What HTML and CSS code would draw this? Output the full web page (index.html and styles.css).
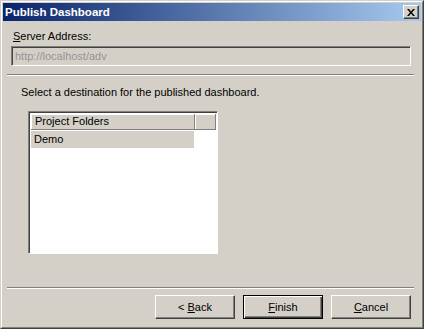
FILE: index.html
```html
<!DOCTYPE html>
<html lang="en">
<head>
    <meta charset="UTF-8">
    <title>Publish Dashboard</title>
    <link rel="stylesheet" href="styles.css">
</head>
<body>
    <div class="window">
        <div class="frame">
            <div class="titlebar">
                <span class="title">Publish Dashboard</span>
                <span class="close-btn">
                    <svg width="8" height="7" viewBox="0 0 8 7">
                        <path d="M0 0h2l2 2.5L6 0h2L5 3.5 8 7H6L4 4.5 2 7H0l3-3.5z" fill="#000"/>
                    </svg>
                </span>
            </div>

            <div class="content">
                <div class="label"><u>S</u>erver Address:</div>
                <div class="textbox">http://localhost/adv</div>
                <div class="separator"></div>

                <div class="prompt">Select a destination for the published dashboard.</div>
                <div class="listbox">
                    <div class="list-header">
                        <div class="col-head main">Project Folders</div>
                        <div class="col-head extra"></div>
                    </div>
                    <div class="list-row selected">Demo</div>
                </div>

                <div class="separator bottom"></div>
                <div class="buttons">
                    <span class="btn"><span>&lt; <u>B</u>ack</span></span>
                    <span class="btn default"><span><u>F</u>inish</span></span>
                    <span class="btn"><span><u>C</u>ancel</span></span>
                </div>
            </div>
        </div>
    </div>
</body>
</html>
```

FILE: styles.css
```css
body {
    margin: 0;
    background: #d4d0c8;
    font-family: 'Liberation Sans', Arial, sans-serif;
    font-size: 11px;
    line-height: 13px;
    color: #000;
}
u {
    text-decoration: underline;
    text-underline-offset: 1px;
}
.window {
    width: 424px;
    height: 329px;
    box-sizing: border-box;
    border: 1px solid;
    border-color: #d4d0c8 #404040 #404040 #d4d0c8;
}
.frame {
    height: 100%;
    box-sizing: border-box;
    border: 1px solid;
    border-color: #fff #808080 #808080 #fff;
    padding: 1px;
    display: flex;
    flex-direction: column;
}
.titlebar {
    height: 18px;
    background: linear-gradient(90deg, #0a246a, #a6caf0);
    display: flex;
    align-items: center;
    justify-content: space-between;
    padding: 0 2px 0 2px;
}
.title {
    color: #fff;
    font-weight: bold;
    font-size: 11.5px;
}
.close-btn {
    width: 16px;
    height: 14px;
    box-sizing: border-box;
    background: #d4d0c8;
    border: 1px solid;
    border-color: #fff #404040 #404040 #fff;
    box-shadow: inset -1px -1px #808080;
    display: flex;
    align-items: center;
    justify-content: center;
}
.content {
    flex: 1;
    display: flex;
    flex-direction: column;
    padding: 9px 10px 0 8px;
}
.label {
    margin-left: 2px;
    height: 13px;
}
.textbox {
    margin-top: 3px;
    width: 400px;
    height: 20px;
    box-sizing: border-box;
    border: 1px solid;
    border-color: #808080 #fff #fff #808080;
    box-shadow: inset 1px 1px #404040;
    color: #949494;
    padding: 3px 0 0 3px;
}
.separator {
    margin: 8px 0 0 -4px;
    width: 407px;
    height: 1px;
    background: #808080;
    border-bottom: 1px solid #fff;
}
.prompt {
    margin: 10px 0 0 10px;
}
.listbox {
    margin: 12px 0 0 17px;
    width: 190px;
    height: 143px;
    box-sizing: border-box;
    border: 1px solid;
    border-color: #808080 #fff #fff #808080;
    box-shadow: inset 1px 1px #404040;
    background: #fff;
    padding: 2px 1px 0 2px;
}
.list-header {
    display: flex;
    height: 16px;
}
.col-head {
    box-sizing: border-box;
    background: #d4d0c8;
    border-right: 1px solid #808080;
    border-bottom: 1px solid #808080;
    box-shadow: inset 1px 1px #fff;
    padding: 1px 0 0 4px;
}
.col-head.main {
    width: 164px;
}
.col-head.extra {
    flex: 1;
}
.list-row {
    margin-top: 1px;
    width: 163px;
    height: 17px;
    padding: 2px 0 0 3px;
    box-sizing: border-box;
}
.list-row.selected {
    background: #d4d0c8;
}
.separator.bottom {
    margin-top: 33px;
}
.buttons {
    margin-top: 6px;
    display: flex;
    justify-content: flex-end;
    gap: 8px;
    width: 400px;
}
.btn {
    width: 80px;
    height: 24px;
    box-sizing: border-box;
    border: 1px solid;
    border-color: #fff #404040 #404040 #fff;
    box-shadow: inset -1px -1px #808080;
    display: flex;
    align-items: center;
    justify-content: center;
}
.btn.default {
    border: 1px solid #000;
    box-shadow: inset 1px 1px #fff, inset -1px -1px #404040, inset -2px -2px #808080;
}
```
